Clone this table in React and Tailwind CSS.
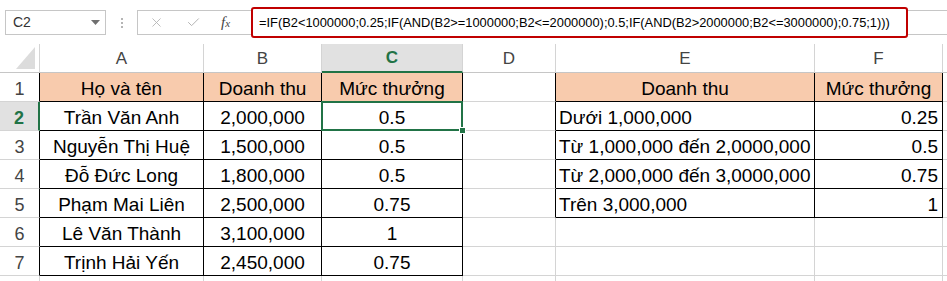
import { X, Check } from "lucide-react";

const people = [
  ["Trần Văn Anh", "2,000,000", "0.5"],
  ["Nguyễn Thị Huệ", "1,500,000", "0.5"],
  ["Đỗ Đức Long", "1,800,000", "0.5"],
  ["Phạm Mai Liên", "2,500,000", "0.75"],
  ["Lê Văn Thành", "3,100,000", "1"],
  ["Trịnh Hải Yến", "2,450,000", "0.75"],
];

const bonus = [
  ["Dưới 1,000,000", "0.25"],
  ["Từ 1,000,000 đến 2,0000,000", "0.5"],
  ["Từ 2,000,000 đến 3,0000,000", "0.75"],
  ["Trên 3,000,000", "1"],
];

const formula =
  "=IF(B2<1000000;0.25;IF(AND(B2>=1000000;B2<=2000000);0.5;IF(AND(B2>2000000;B2<=3000000);0.75;1)))";

const dark = "border-r border-b border-r-black border-b-black";
const light = "border-r border-b border-r-[#d4d4d4] border-b-[#d4d4d4]";
const darkRight = "border-r border-b border-r-black border-b-[#d4d4d4]";
const salmon = "bg-[#f8cbad]";

const Cell = ({ className = "", children }) => (
  <div
    className={
      "flex items-end whitespace-nowrap pb-[1px] text-[19px] leading-[22px] text-black " +
      className
    }
  >
    {children}
  </div>
);

const RowHead = ({ n, active, border }) => (
  <div
    className={
      "flex items-end justify-center border-b border-b-[#d4d4d4] pb-[1px] text-[18px] leading-[22px] " +
      (active
        ? "border-r-2 border-r-[#217346] bg-[#e1e1e1] font-bold text-[#217346]"
        : "border-r bg-white text-[#444] " + border)
    }
  >
    {n}
  </div>
);

const ColHead = ({ label, className = "" }) => (
  <div
    className={
      "flex items-end justify-center pb-[2px] text-[17px] leading-[22px] " +
      className
    }
  >
    {label}
  </div>
);

export default function App() {
  const rows = [];
  for (let r = 1; r <= 8; r++) {
    const inPeople = r <= 7;
    const inBonus = r <= 5;
    const p = r >= 2 ? people[r - 2] : null;
    const b = r >= 2 && r <= 5 ? bonus[r - 2] : null;

    rows.push(
      <RowHead
        key={"h" + r}
        n={r <= 7 ? r : ""}
        active={r === 2}
        border={inPeople ? "border-r-black" : "border-r-[#d4d4d4]"}
      />
    );

    if (r === 1) {
      rows.push(
        <Cell key="a1" className={"justify-center " + salmon + " " + dark}>Họ và tên</Cell>,
        <Cell key="b1" className={"justify-center " + salmon + " " + dark}>Doanh thu</Cell>,
        <Cell key="c1" className={"justify-center " + salmon + " " + dark}>Mức thưởng</Cell>
      );
    } else if (p) {
      rows.push(
        <Cell key={"a" + r} className={"justify-center " + dark}>{p[0]}</Cell>,
        <Cell key={"b" + r} className={"justify-center " + dark}>{p[1]}</Cell>,
        <Cell key={"c" + r} className={"relative justify-center " + dark}>
          {p[2]}
          {r === 2 && (
            <div className="absolute -inset-px z-10 border-2 border-[#217346]">
              <div className="absolute -bottom-[5px] -right-[5px] h-[7px] w-[7px] border border-white bg-[#217346]" />
            </div>
          )}
        </Cell>
      );
    } else {
      rows.push(
        <Cell key={"a" + r} className={light} />,
        <Cell key={"b" + r} className={light} />,
        <Cell key={"c" + r} className={light} />
      );
    }

    rows.push(<Cell key={"d" + r} className={inBonus ? darkRight : light} />);

    if (r === 1) {
      rows.push(
        <Cell key="e1" className={"justify-center " + salmon + " " + dark}>Doanh thu</Cell>,
        <Cell key="f1" className={"justify-center " + salmon + " " + dark}>Mức thưởng</Cell>
      );
    } else if (b) {
      rows.push(
        <Cell key={"e" + r} className={"pl-[3px] " + dark}>{b[0]}</Cell>,
        <Cell key={"f" + r} className={"justify-end pr-[4px] " + dark}>{b[1]}</Cell>
      );
    } else {
      rows.push(
        <Cell key={"e" + r} className={light} />,
        <Cell key={"f" + r} className={light} />
      );
    }

    rows.push(<Cell key={"g" + r} className="border-b border-b-[#d4d4d4]" />);
  }

  return (
    <div className="h-[281px] w-[947px] overflow-hidden bg-white font-['Liberation_Sans',Arial,sans-serif]">
      {/* formula bar */}
      <div className="flex h-[44px] pt-[7px]">
        <div className="ml-[5px] mt-[3px] flex h-[25px] w-[101px] items-center justify-between border border-[#c6c6c6] pl-[7px] pr-[5px] text-[14px] text-[#333]">
          <span>C2</span>
          <svg width="9" height="5" viewBox="0 0 9 5">
            <path d="M0 0h9L4.5 5z" fill="#6f6f6f" />
          </svg>
        </div>
        <div className="mt-[3px] flex h-[25px] w-[31px] flex-col items-center justify-center gap-[2px]">
          <div className="h-[2px] w-[2px] bg-[#b5b5b5]" />
          <div className="h-[2px] w-[2px] bg-[#b5b5b5]" />
          <div className="h-[2px] w-[2px] bg-[#b5b5b5]" />
        </div>
        <div className="mt-[3px] flex h-[25px] w-[115px] items-center border border-r-0 border-[#c6c6c6]">
          <X size={15} strokeWidth={1.4} className="ml-[11px] text-[#b3b3b3]" />
          <Check size={15} strokeWidth={1.6} className="ml-[22px] text-[#b3b3b3]" />
          <span className="ml-[20px] font-['Liberation_Serif',serif] text-[15px] italic text-[#444]">
            f<span className="text-[11px]">x</span>
          </span>
        </div>
        <div className="relative flex-1">
          <div className="mt-[3px] h-[25px] border-y border-l border-[#c6c6c6]" />
          <div className="absolute -left-px top-0 flex h-[31px] w-[657px] items-center whitespace-nowrap rounded-[3px] border-2 border-[#c00000] bg-white pl-[6px] text-[12.85px] text-black">
            {formula}
          </div>
        </div>
      </div>

      {/* sheet */}
      <div className="grid grid-cols-[40px_164px_118px_141px_93px_259px_128px_1fr] auto-rows-[29px]">
        <div className="flex items-end justify-end border-r border-b border-r-[#d4d4d4] border-b-[#c6c6c6] pb-[3px] pr-[4px]">
          <svg width="19" height="22" viewBox="0 0 19 22">
            <path d="M19 0V22H0z" fill="#dcdcdc" />
          </svg>
        </div>
        <ColHead label="A" className="border-r border-b border-r-[#d4d4d4] border-b-[#c6c6c6] text-[#444]" />
        <ColHead label="B" className="border-r border-b border-r-[#d4d4d4] border-b-[#c6c6c6] text-[#444]" />
        <ColHead label="C" className="border-r border-b-2 border-r-[#d4d4d4] border-b-[#217346] bg-[#e1e1e1] font-bold text-[#217346]" />
        <ColHead label="D" className="border-r border-b border-r-[#d4d4d4] border-b-[#c6c6c6] text-[#444]" />
        <ColHead label="E" className="border-r border-b border-r-[#d4d4d4] border-b-[#c6c6c6] text-[#444]" />
        <ColHead label="F" className="border-r border-b border-r-[#d4d4d4] border-b-[#c6c6c6] text-[#444]" />
        <ColHead label="" className="border-b border-b-[#c6c6c6]" />
        {rows}
      </div>
    </div>
  );
}
